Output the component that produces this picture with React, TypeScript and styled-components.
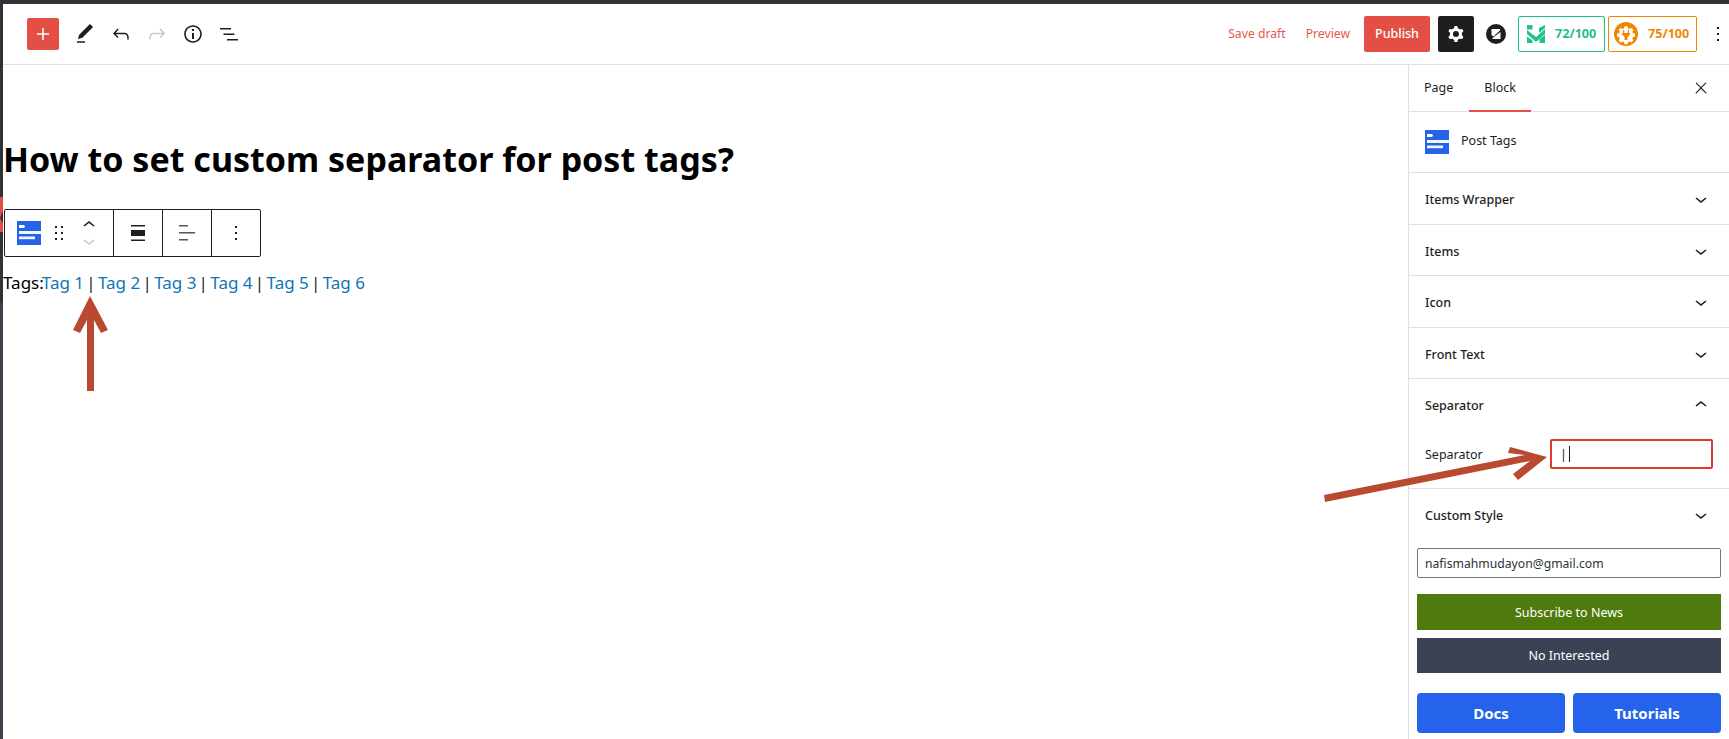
import React from "react";
import styled, { createGlobalStyle } from "styled-components";

const Global = createGlobalStyle`
  html, body { margin: 0; padding: 0; height: 100%; background: #32373c; overflow: hidden; }
  body { font-family: "Noto Sans", "Open Sans", sans-serif; }
  * { box-sizing: border-box; }
`;

const Frame = styled.div`
  position: relative;
  width: 1729px;
  height: 739px;
  padding: 4px 0 0 3px;
  background: linear-gradient(#2e3338 303px, #3c444b 303px);
  overflow: hidden;
`;
const Page = styled.div`
  width: 1726px;
  height: 735px;
  background: #fff;
  display: flex;
  flex-direction: column;
`;
const TopBar = styled.header`
  height: 61px;
  flex: none;
  display: flex;
  align-items: center;
  padding: 0 0 1px 24px;
  border-bottom: 1px solid #e0e0e0;
`;
const AddButton = styled.div`
  width: 32px;
  height: 32px;
  border-radius: 2px;
  background: #e34f45;
  display: flex;
  align-items: center;
  justify-content: center;
  margin-right: 8px;
`;
const ToolIcon = styled.div`
  width: 36px;
  height: 36px;
  display: flex;
  align-items: center;
  justify-content: center;
`;
const Spacer = styled.div`
  flex: 1;
`;
const LinkText = styled.span<{ $mr: number }>`
  font-size: 12.2px;
  color: #e8584e;
  margin-right: ${(p) => p.$mr}px;
`;
const Publish = styled.div`
  width: 66px;
  height: 36px;
  border-radius: 2px;
  background: #e34f45;
  color: #fff;
  font-size: 12.5px;
  font-weight: 500;
  display: flex;
  align-items: center;
  justify-content: center;
  margin-right: 8px;
`;
const GearButton = styled.div`
  width: 36px;
  height: 36px;
  border-radius: 2px;
  background: #1e1e1e;
  display: flex;
  align-items: center;
  justify-content: center;
  margin-right: 12px;
`;
const Zicon = styled.div`
  width: 20px;
  height: 20px;
  margin-right: 12px;
  display: flex;
`;
const Badge = styled.div<{ $color: string; $w: number; $mr: number; $pad: number }>`
  width: ${(p) => p.$w}px;
  height: 36px;
  border: 1px solid ${(p) => p.$color};
  border-radius: 2px;
  color: ${(p) => p.$color};
  font-size: 12.6px;
  font-weight: 700;
  display: flex;
  align-items: center;
  padding-left: ${(p) => p.$pad}px;
  gap: 10px;
  margin-right: ${(p) => p.$mr}px;
  white-space: nowrap;
`;
const MoreIcon = styled.div`
  width: 24px;
  height: 24px;
  margin-right: -1px;
`;
const Body = styled.div`
  flex: 1;
  display: flex;
  min-height: 0;
`;
const Editor = styled.main`
  flex: 1;
  padding: 69px 0 0 0;
`;
const Title = styled.h1`
  margin: 0;
  height: 50px;
  font-size: 34px;
  line-height: 50px;
  font-weight: 700;
  color: #000;
  white-space: nowrap;
`;
const BlockBar = styled.div`
  margin: 25px 0 0 1px;
  width: 257px;
  height: 48px;
  border: 1px solid #1e1e1e;
  border-radius: 2px;
  display: flex;
  background: #fff;
`;
const BarGroup = styled.div<{ $w: number }>`
  width: ${(p) => p.$w}px;
  flex: none;
  display: flex;
  align-items: center;
  justify-content: center;
  & + & {
    border-left: 1px solid #1e1e1e;
  }
`;
const MoverGroup = styled(BarGroup)`
  justify-content: flex-start;
  padding-left: 12px;
  gap: 6px;
`;
const MoverStack = styled.div`
  display: flex;
  flex-direction: column;
  width: 24px;
`;
const MoverIcon = styled.svg`
  display: block;
  width: 24px;
  height: 16px;
`;
const TagLine = styled.p`
  margin: 13px 0 0 0;
  font-size: 17px;
  line-height: 26px;
  color: #000;
  white-space: nowrap;
`;
const TagsLabel = styled.span`
  margin-right: -2px;
`;
const TagLink = styled.span`
  color: #0f76b4;
`;
const Sep = styled.span`
  color: #1e1e1e;
  margin: 0 2.4px 0 2.2px;
`;
const Side = styled.aside`
  width: 321px;
  flex: none;
  border-left: 1px solid #e0e0e0;
  display: flex;
  flex-direction: column;
`;
const Tabs = styled.div`
  height: 47px;
  flex: none;
  display: flex;
  align-items: stretch;
  border-bottom: 1px solid #e0e0e0;
  padding: 0 19px 0 15px;
  font-size: 12.5px;
  color: #1e1e1e;
`;
const Tab = styled.div<{ $active?: boolean }>`
  display: flex;
  align-items: center;
  margin-bottom: -1px;
  padding: ${(p) => (p.$active ? "0 15px" : "0")};
  margin-left: ${(p) => (p.$active ? "16px" : "0")};
  border-bottom: 2px solid ${(p) => (p.$active ? "#e34f45" : "transparent")};
`;
const TabClose = styled.div`
  margin-left: auto;
  display: flex;
  align-items: center;
`;
const BlockCard = styled.div`
  height: 61px;
  flex: none;
  border-bottom: 1px solid #e0e0e0;
  display: flex;
  align-items: center;
  padding: 0 16px;
  gap: 12px;
  font-size: 12.5px;
  color: #1e1e1e;
`;
const CardLabel = styled.span`
  padding-bottom: 3px;
`;
const Section = styled.div<{ $h: number; $plain?: boolean }>`
  height: ${(p) => p.$h}px;
  flex: none;
  border-bottom: ${(p) => (p.$plain ? "none" : "1px solid #e0e0e0")};
  padding: 0 16px;
`;
const SectionHead = styled.div`
  height: 52px;
  display: flex;
  align-items: center;
  justify-content: space-between;
  font-size: 12.5px;
  font-weight: 500;
  color: #1e1e1e;
`;
const Field = styled.div`
  display: flex;
  align-items: center;
  justify-content: space-between;
  height: 30px;
  margin-top: 8px;
  font-size: 12.5px;
  color: #1e1e1e;
`;
const RedInput = styled.div`
  width: 163px;
  height: 30px;
  border: 2px solid #e03a30;
  border-radius: 2px;
  display: flex;
  align-items: center;
  padding-left: 8px;
  font-size: 12.5px;
  color: #1e1e1e;
`;
const Caret = styled.span`
  display: inline-block;
  width: 1px;
  height: 16px;
  margin-left: 2px;
  background: #1e1e1e;
`;
const Promo = styled.div`
  padding: 7px 8px 0;
  display: flex;
  flex-direction: column;
`;
const EmailBox = styled.div`
  height: 30px;
  border: 1px solid #757575;
  border-radius: 2px;
  display: flex;
  align-items: center;
  padding-left: 7px;
  font-size: 12.2px;
  color: #2c3338;
`;
const WideButton = styled.div<{ $bg: string; $h: number; $mt: number }>`
  height: ${(p) => p.$h}px;
  margin-top: ${(p) => p.$mt}px;
  background: ${(p) => p.$bg};
  color: #fff;
  font-size: 12.5px;
  display: flex;
  align-items: center;
  justify-content: center;
`;
const LinkRow = styled.div`
  display: grid;
  grid-template-columns: 148px 148px;
  gap: 8px;
  margin-top: 20px;
`;
const BlueButton = styled.div`
  height: 40px;
  border-radius: 4px;
  background: #2563eb;
  color: #fff;
  font-size: 15px;
  font-weight: 700;
  display: flex;
  align-items: center;
  justify-content: center;
`;
const Overlay = styled.svg`
  position: absolute;
  left: 0;
  top: 0;
  pointer-events: none;
`;
const Marker = styled.div`
  position: absolute;
  left: 0;
  top: 197px;
  width: 3px;
  height: 35px;
  background: #e34f45;
  clip-path: polygon(0 0, 100% 0, 100% 40%, 0 60%, 100% 75%, 100% 100%, 0 100%);
`;

const Icon = ({ d, size = 24, fill = "#1e1e1e" }: { d: string; size?: number; fill?: string }) => (
  <svg width={size} height={size} viewBox="0 0 24 24" fill={fill} fillRule="evenodd">
    <path d={d} />
  </svg>
);

const P = {
  plus: "M18 11.2h-5.2V6h-1.6v5.2H6v1.6h5.2V18h1.6v-5.2H18z",
  pen: "M20.1 5.1L16.9 2 6.2 12.7l-1.3 4.4 4.5-1.3L20.1 5.1zM4 20.8h8v-1.5H4v1.5z",
  undo: "M18.3 11.7c-.6-.6-1.4-.9-2.3-.9H6.7l2.9-3.3-1.1-1-4.5 5L8.5 16l1-1-2.7-2.7H16c.5 0 .9.2 1.3.5 1 1 1 3.4 1 4.5v.3h1.5v-.2c0-1.5 0-4.3-1.5-5.7z",
  redo: "M15.6 6.5l-1.1 1 2.9 3.3H8c-.9 0-1.7.3-2.3.9-1.4 1.5-1.4 4.2-1.4 5.6v.2h1.5v-.3c0-1.1 0-3.5 1-4.5.3-.3.7-.5 1.3-.5h9.2L14.5 15l1.1 1.1 4.6-4.6-4.6-5z",
  info: "M12 3.2c-4.8 0-8.8 3.9-8.8 8.8 0 4.8 3.9 8.8 8.8 8.8 4.8 0 8.8-3.9 8.8-8.8 0-4.8-4-8.8-8.8-8.8zm0 16c-4 0-7.2-3.3-7.2-7.2C4.8 8 8 4.8 12 4.8s7.2 3.3 7.2 7.2c0 4-3.2 7.2-7.2 7.2zM11 17h2v-6h-2v6zm0-8h2V7h-2v2z",
  list: "M3 6h11v1.5H3V6zm3.5 5.5h11V13h-11v-1.5zM21 17H10v1.5h11V17z",
  close: "M13 11.8l6.1-6.3-1-1-6.1 6.2-6.1-6.2-1 1 6.1 6.3-6.5 6.7 1 1 6.5-6.6 6.5 6.6 1-1z",
  down: "M17.5 11.6L12 16l-5.5-4.4.9-1.2L12 14l4.5-3.6 1 1.2z",
  up: "M6.5 12.4L12 8l5.5 4.4-.9 1.2L12 10l-4.5 3.6-1-1.2z",
  more: "M13 19h-2v-2h2v2zm0-6h-2v-2h2v2zm0-6h-2V5h2v2z",
  drag: "M8 7h2V5H8v2zm0 6h2v-2H8v2zm0 6h2v-2H8v2zm6-14v2h2V5h-2zm0 8h2v-2h-2v2zm0 6h2v-2h-2v2z",
  cog: "M10.289 4.836A1 1 0 0111.275 4h1.306a1 1 0 01.987.836l.244 1.466c.787.26 1.503.679 2.108 1.218l1.393-.522a1 1 0 011.216.437l.653 1.13a1 1 0 01-.23 1.273l-1.148.944a6.025 6.025 0 010 2.435l1.149.946a1 1 0 01.23 1.272l-.653 1.13a1 1 0 01-1.216.437l-1.394-.522c-.605.54-1.32.958-2.108 1.218l-.244 1.466a1 1 0 01-.987.836h-1.306a1 1 0 01-.986-.836l-.244-1.466a5.995 5.995 0 01-2.108-1.218l-1.394.522a1 1 0 01-1.217-.436l-.653-1.131a1 1 0 01.23-1.272l1.149-.946a6.026 6.026 0 010-2.435l-1.148-.944a1 1 0 01-.23-1.272l.653-1.131a1 1 0 011.217-.437l1.393.522a5.994 5.994 0 012.108-1.218l.244-1.466zM14.929 12a3 3 0 11-6 0 3 3 0 016 0z",
  wide: "M19 5.5H5V4h14v1.5ZM19 20H5v-1.5h14V20ZM5 9h14v6H5V9Z",
  left: "M13 5.5H4V4h9v1.5Zm7 7H4V11h16v1.5Zm-7 7H4V18h9v1.5Z",
};

const TagsIcon = () => (
  <svg width="24" height="24" viewBox="0 0 24 24">
    <rect width="24" height="24" fill="#2563eb" />
    <path d="M2 4h5l1 1.5-1 1.5H2z" fill="#fff" />
    <rect x="2" y="10" width="22" height="3" fill="#fff" opacity="0.95" />
    <rect x="2" y="15.5" width="16" height="2.7" fill="#fff" opacity="0.95" />
  </svg>
);

const ZLogo = () => (
  <svg width="20" height="20" viewBox="0 0 20 20">
    <circle cx="10" cy="10" r="10" fill="#1e1e1e" />
    <path d="M5.5 5h8.5v1.5L7.5 12.5 5.5 11zM14.5 8v7H6.5v-1z" fill="#fff" />
  </svg>
);

const RankLogo = () => (
  <svg width="18" height="18" viewBox="0 0 18 18" fill="#22c38b">
    <path d="M0 0h5.5v4.5H0z" />
    <path d="M0 5l9 7 9-8v5l-9 8-9-8z" />
    <path d="M12 3l6-3v3l-6 5z" />
    <path d="M0 11.5l5.5 4V18H0zM12.5 14L18 10v8h-5.5z" />
  </svg>
);

const GearPlug = () => (
  <svg width="24" height="24" viewBox="0 0 24 24">
    <circle cx="12" cy="12" r="12" fill="#f08600" />
    <path
      d="M10.5 4.2h3l.4 2 1.6.7 1.8-1.1 2.1 2.1-1.1 1.8.7 1.6 2 .4v3l-2 .4-.7 1.6 1.1 1.8-2.1 2.1-1.8-1.1-1.6.7-.4 2h-3l-.4-2-1.6-.7-1.8 1.1-2.1-2.1 1.1-1.8-.7-1.6-2-.4v-3l2-.4.7-1.6-1.1-1.8 2.1-2.1 1.8 1.1 1.6-.7z"
      fill="#fff"
    />
    <path d="M9 8h1.2v3h3.6V8H15v3h1v1.5l-2.5 2.5V18h-3v-3L8 12.5V11h1z" fill="#f08600" />
  </svg>
);

const tags = ["Tag 1", "Tag 2", "Tag 3", "Tag 4", "Tag 5", "Tag 6"];
const closedTop = [
  { name: "Items Wrapper", h: 52 },
  { name: "Items", h: 51 },
  { name: "Icon", h: 52 },
  { name: "Front Text", h: 51 },
];

export default function App() {
  return (
    <Frame>
      <Global />
      <Page>
        <TopBar>
          <AddButton>
            <Icon d={P.plus} fill="#fff" />
          </AddButton>
          <ToolIcon><Icon d={P.pen} /></ToolIcon>
          <ToolIcon><Icon d={P.undo} /></ToolIcon>
          <ToolIcon><Icon d={P.redo} fill="#c8c8c8" /></ToolIcon>
          <ToolIcon><Icon d={P.info} /></ToolIcon>
          <ToolIcon><Icon d={P.list} /></ToolIcon>
          <Spacer />
          <LinkText $mr={20}>Save draft</LinkText>
          <LinkText $mr={14}>Preview</LinkText>
          <Publish>Publish</Publish>
          <GearButton><Icon d={P.cog} fill="#fff" /></GearButton>
          <Zicon><ZLogo /></Zicon>
          <Badge $color="#1fbf8a" $w={87} $mr={3} $pad={8}>
            <RankLogo />72/100
          </Badge>
          <Badge $color="#f08600" $w={89} $mr={9} $pad={5}>
            <GearPlug />75/100
          </Badge>
          <MoreIcon><Icon d={P.more} /></MoreIcon>
        </TopBar>
        <Body>
          <Editor>
            <Title>How to set custom separator for post tags?</Title>
            <BlockBar>
              <MoverGroup $w={108}>
                <TagsIcon />
                <Icon d={P.drag} />
                <MoverStack>
                  <MoverIcon viewBox="0 4 24 16"><path d={P.up} fill="#1e1e1e" /></MoverIcon>
                  <MoverIcon viewBox="0 4 24 16"><path d={P.down} fill="#c8c8c8" /></MoverIcon>
                </MoverStack>
              </MoverGroup>
              <BarGroup $w={49}><Icon d={P.wide} /></BarGroup>
              <BarGroup $w={49}><Icon d={P.left} fill="#555" /></BarGroup>
              <BarGroup $w={49}><Icon d={P.more} /></BarGroup>
            </BlockBar>
            <TagLine>
              <TagsLabel>Tags:</TagsLabel>
              {tags.map((t, i) => (
                <React.Fragment key={t}>
                  <TagLink>{t}</TagLink>
                  {i < tags.length - 1 && <Sep>|</Sep>}
                </React.Fragment>
              ))}
            </TagLine>
          </Editor>
          <Side>
            <Tabs>
              <Tab>Page</Tab>
              <Tab $active>Block</Tab>
              <TabClose><Icon d={P.close} size={18} /></TabClose>
            </Tabs>
            <BlockCard>
              <TagsIcon />
              <CardLabel>Post Tags</CardLabel>
            </BlockCard>
            {closedTop.map((s) => (
              <Section key={s.name} $h={s.h}>
                <SectionHead>
                  {s.name}
                  <Icon d={P.down} />
                </SectionHead>
              </Section>
            ))}
            <Section $h={110}>
              <SectionHead>
                Separator
                <Icon d={P.up} />
              </SectionHead>
              <Field>
                Separator
                <RedInput>|<Caret /></RedInput>
              </Field>
            </Section>
            <Section $h={52} $plain>
              <SectionHead>
                Custom Style
                <Icon d={P.down} />
              </SectionHead>
            </Section>
            <Promo>
              <EmailBox>nafismahmudayon@gmail.com</EmailBox>
              <WideButton $bg="#4f7a0d" $h={36} $mt={16}>Subscribe to News</WideButton>
              <WideButton $bg="#3a4254" $h={35} $mt={8}>No Interested</WideButton>
              <LinkRow>
                <BlueButton>Docs</BlueButton>
                <BlueButton>Tutorials</BlueButton>
              </LinkRow>
            </Promo>
          </Side>
        </Body>
      </Page>
      <Marker />
      <Overlay width="1729" height="739" viewBox="0 0 1729 739">
        <g fill="#b94a30">
          <path d="M90 296L108 330L101 333L94 320V391H87V320L80 333L73 330Z" />
          <path d="M1547 457L1518 480L1513 474L1530 461L1325 502L1324 495L1525 455L1508 453L1510 447Z" />
        </g>
      </Overlay>
    </Frame>
  );
}
